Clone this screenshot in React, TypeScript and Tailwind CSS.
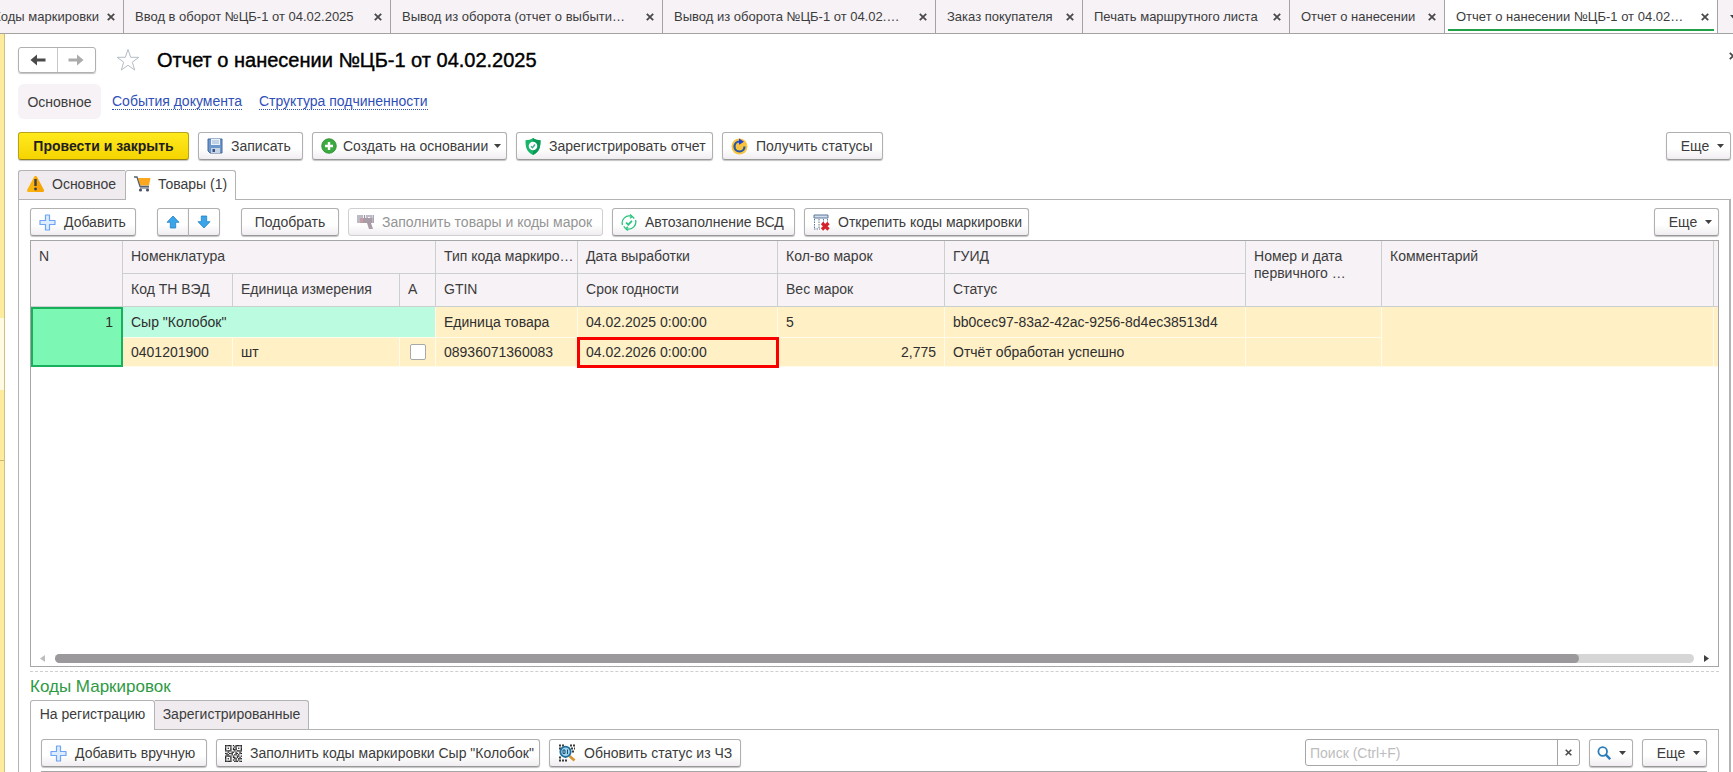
import React from 'react';
import clsx from 'clsx';

const documentTabs = [
  { title: 'Коды маркировки', width: 'w-[124px]', clipped: true },
  { title: 'Ввод в оборот №ЦБ-1 от 04.02.2025', width: 'w-[267px]' },
  { title: 'Вывод из оборота (отчет о выбыти…', width: 'w-[272px]' },
  { title: 'Вывод из оборота №ЦБ-1 от 04.02.…', width: 'w-[273px]' },
  { title: 'Заказ покупателя', width: 'w-[147px]' },
  { title: 'Печать маршрутного листа', width: 'w-[207px]' },
  { title: 'Отчет о нанесении', width: 'w-[155px]' },
  { title: 'Отчет о нанесении №ЦБ-1 от 04.02…', width: 'w-[273px]', active: true },
];

const QR_ROWS = [
  '1111101011111',
  '1000100110001',
  '1010101010101',
  '1000101110001',
  '1111100101111',
  '0010011010010',
  '1101110011011',
  '0110010110100',
  '1111101001101',
  '1000101101010',
  '1010100110111',
  '1000101010100',
  '1111100111011',
];

const CrossIcon = ({ className = 'size-2' }: { className?: string }) => (
  <svg viewBox="0 0 8 8" className={className} fill="none" stroke="#4a4a4a" strokeWidth="1.8">
    <path d="M.8 .8 7.2 7.2M7.2 .8 .8 7.2" />
  </svg>
);

const Caret = () => (
  <svg viewBox="0 0 7 4" className="h-1 w-[7px] shrink-0">
    <path d="M0 0h7L3.5 4z" fill="#404040" />
  </svg>
);

const ArrowIcon = ({ muted, flip }: { muted?: boolean; flip?: boolean }) => (
  <svg viewBox="0 0 16 12" className={clsx('h-3 w-4', flip && 'rotate-180')}>
    <path d="M7 .5V4.600h8.500v2.800H7v4.100L.5 6z" fill={muted ? '#ababab' : '#4a4a4a'} />
  </svg>
);

const StarIcon = () => (
  <svg viewBox="0 0 24 24" className="size-6">
    <path d="M12 1.500 14.700 9.300H22.800L16.300 14.200 18.700 22 12 17.300 5.300 22 7.700 14.200 1.200 9.300H9.300z" fill="#fff" stroke="#b4bcc4" />
  </svg>
);

const FloppyIcon = () => (
  <svg viewBox="0 0 16 16" className="size-4 shrink-0">
    <path d="M1 1h14v14H3l-2-2z" fill="#6d97cb" stroke="#45699c" />
    <path d="M4 1h9v6H4z" fill="#e9f1fa" />
    <path d="M5 3h7M5 5h7" stroke="#9bb3d0" />
    <path d="M4 10h9v5H4z" fill="#c7d4e4" />
    <path d="M5.500 11h2.500v3H5.500z" fill="#35547f" />
  </svg>
);

const PlusCircleIcon = () => (
  <svg viewBox="0 0 16 16" className="size-4 shrink-0">
    <circle cx="8" cy="8" r="7.300" fill="#3cab3f" stroke="#2a8a33" strokeWidth=".8" />
    <path d="M8 4v8M4 8h8" stroke="#fff" strokeWidth="2.400" />
  </svg>
);

const ShieldIcon = () => (
  <svg viewBox="0 0 16 17" className="h-[17px] w-4 shrink-0">
    <path d="M8 0c2 1.500 4.500 2.200 7.500 2.200 0 7-1 11.500-7.500 14.800C1.500 13.700.5 9.200.5 2.200 3.500 2.200 6 1.500 8 0z" fill="#16b568" />
    <path d="M8 0c2 1.500 4.500 2.200 7.500 2.200 0 7-1 11.500-7.500 14.800z" fill="#0a9a57" />
    <circle cx="8" cy="8" r="4.300" fill="#fff" />
    <path d="m6 8.200 1.500 1.500L10 6.500" fill="none" stroke="#3fae94" strokeWidth="1.500" />
  </svg>
);

const RefreshIcon = () => (
  <svg viewBox="0 0 17 17" className="size-[17px] shrink-0">
    <circle cx="8.500" cy="8.500" r="8" fill="#f8c440" />
    <path d="M13.500 8.500a5 5 0 1 1-5-5" fill="none" stroke="#2456a8" strokeWidth="2.200" />
    <path d="M8 .5 13 3.700 8 6.800z" fill="#1f3fd0" />
  </svg>
);

const WarningIcon = () => (
  <svg viewBox="0 0 17 16" className="h-4 w-[17px] shrink-0">
    <path d="M8.500 1.500 15.500 14.500H1.500z" fill="#fbb40c" stroke="#fbb40c" strokeWidth="3" strokeLinejoin="round" />
    <path d="M8.500 0Q9.500 0 10 1L17 14.500Q17 16 15.500 16H8.500z" fill="#f39a06" opacity=".6" />
    <path d="M8.500 3v7" stroke="#3c4046" strokeWidth="2.400" />
    <circle cx="8.500" cy="13" r="1.400" fill="#3c4046" />
  </svg>
);

const CartIcon = () => (
  <svg viewBox="0 0 17 16" className="h-4 w-[17px] shrink-0">
    <path d="M4 2h12.500L15 9.500H6z" fill="#fba81c" />
    <path d="M0 1h3l3 9.500h9" fill="none" stroke="#57606c" strokeWidth="1.300" />
    <path d="M6 12h9" stroke="#57606c" />
    <circle cx="6.500" cy="14" r="1.600" fill="#4b5560" />
    <circle cx="13.500" cy="14" r="1.600" fill="#4b5560" />
  </svg>
);

const PlusIcon = () => (
  <svg viewBox="0 0 17 17" className="size-[17px] shrink-0">
    <path d="M6.500 1h4v5.500H16v4h-5.500V16h-4v-5.500H1v-4h5.500z" fill="#dcebff" stroke="#6ea4f4" strokeWidth="1.200" strokeLinejoin="round" />
  </svg>
);

const BlockArrowIcon = ({ down }: { down?: boolean }) => (
  <svg viewBox="0 0 14 14" className={clsx('size-3.5', down && 'rotate-180')}>
    <path d="M7 1 13 7.300H9.700V13H4.300V7.300H1z" fill="#3aa5ea" stroke="#2482c4" strokeWidth=".8" />
  </svg>
);

const ScannerIcon = () => (
  <svg viewBox="0 0 17 16" className="h-4 w-[17px] shrink-0">
    <path d="M1 1v8M3 1v8M5 1v8M7.500 1v7M10 1v3M12 1v2M14 1v3M16.200 1v8" stroke="#9a96a8" strokeWidth="1.300" />
    <path d="M3 4h12.500v5h-1.500l2 6h-4l-2-6H3z" fill="#a89ca6" />
    <path d="M3 4h3v5H3z" fill="#c79ca4" />
  </svg>
);

const SyncCheckIcon = () => (
  <svg viewBox="0 0 16 17" className="h-[17px] w-4 shrink-0" fill="none" stroke="#27c47d" strokeWidth="1.300">
    <path d="M1.500 11A7 7 0 0 1 10 2.200M14.500 6A7 7 0 0 1 6 14.800" />
    <path d="M9 .5 11.300 2.500 9 4.300M7 12.700 4.700 14.700 7 16.500" />
    <path d="M11.500 2.800l1.800 1.600M4.300 14l-1.600-1.600" />
    <path d="m5 8.500 2.300 2.200L11 6.800" strokeWidth="1.700" />
  </svg>
);

const DetachIcon = () => (
  <svg viewBox="0 0 17 17" className="size-[17px] shrink-0">
    <path d="M1 1h14v3H1z" fill="#cfdcec" stroke="#5c7797" />
    <path d="M1.500 5v10M6 5v10M10.500 5v4M14.500 5v3M1 15h6" stroke="#5c7797" strokeDasharray="1.500 1" />
    <path d="m9 9 6.500 6.500M15.500 9 9 15.500" stroke="#d5232c" strokeWidth="3.200" />
  </svg>
);

const QrIcon = () => (
  <svg viewBox="0 0 13 13" className="size-[17px] shrink-0">
    {QR_ROWS.map((row, y) =>
      row.split('').map((cell, x) => (cell === '1' ? <rect key={`${x}-${y}`} x={x} y={y} width="1" height="1" fill="#222" /> : null))
    )}
  </svg>
);

const CodeSearchIcon = () => (
  <svg viewBox="0 0 18 18" className="size-[18px] shrink-0">
    <path d="M1 1.500h5M12 1.500h5M1 4.500h2M13 4.500h4M14 7.500h3M1 13.500h3M1 16.500h9" stroke="#3a3a3a" strokeWidth="2" strokeDasharray="2 1" />
    <path d="m11.500 12 5 4.500" stroke="#d99530" strokeWidth="2.800" />
    <circle cx="7.500" cy="7.800" r="5.200" fill="#9fd4ee" stroke="#1f6f9c" strokeWidth="1.800" />
    <path d="M5 6h2v3.500H5zM9.500 5.500v4.500" fill="none" stroke="#1d4f70" />
  </svg>
);

const SearchIcon = () => (
  <svg viewBox="0 0 14 14" className="size-3.5" fill="none" stroke="#2b7cb8">
    <circle cx="5.700" cy="5.500" r="4.300" strokeWidth="1.800" />
    <path d="m8.800 8.700 4.400 4.500" strokeWidth="2.400" />
  </svg>
);

interface ToolButtonProps extends React.ButtonHTMLAttributes<HTMLButtonElement> {
  icon?: React.ReactNode;
  menu?: boolean;
}

const ToolButton: React.FC<ToolButtonProps> = ({ icon, menu, className, children, ...rest }) => (
  <button
    type="button"
    className={clsx(
      'flex h-7 shrink-0 items-center whitespace-nowrap rounded-[3px] border border-[#b0b0b0] border-b-[#989898] bg-linear-to-b from-white from-60% to-[#f0edf0] shadow-[0_1px_1px_#c4c4c4] disabled:border-[#cfcfcf] disabled:text-[#949494] disabled:shadow-none',
      icon ? 'pl-2' : 'justify-center',
      icon && menu ? 'gap-1.5' : 'gap-2',
      className
    )}
    {...rest}
  >
    {icon}
    {children}
    {menu && <Caret />}
  </button>
);

const MoreButton = () => (
  <ToolButton menu className="ml-auto w-[65px] pl-2">
    Еще
  </ToolButton>
);

const headCell = 'border-r border-b border-[#cbcfcd] bg-[#f6f2f6] pt-[7px] pl-2 text-left align-top font-normal leading-[17px] whitespace-nowrap';
const bodyCell = 'border-r border-b border-[#fffbea] bg-[#fff0c6] px-2 truncate';

const GoodsTable = () => (
  <table className="w-full table-fixed border-separate border-spacing-0 text-[#3c3c3c]">
    <colgroup>
      <col className="w-[92px]" />
      <col className="w-[110px]" />
      <col className="w-[167px]" />
      <col className="w-9" />
      <col className="w-[142px]" />
      <col className="w-[200px]" />
      <col className="w-[167px]" />
      <col className="w-[301px]" />
      <col className="w-[136px]" />
      <col />
      <col className="w-1" />
    </colgroup>
    <thead>
      <tr className="h-[33px]">
        <th rowSpan={2} className={headCell}>N</th>
        <th colSpan={3} className={headCell}>Номенклатура</th>
        <th className={headCell}>Тип кода маркиро…</th>
        <th className={headCell}>Дата выработки</th>
        <th className={headCell}>Кол-во марок</th>
        <th className={headCell}>ГУИД</th>
        <th rowSpan={2} className={headCell}>Номер и дата<br />первичного …</th>
        <th rowSpan={2} className={headCell}>Комментарий</th>
        <th rowSpan={2} className="border-b border-[#cbcfcd] bg-[#f6f2f6]" />
      </tr>
      <tr className="h-[33px]">
        <th className={headCell}>Код ТН ВЭД</th>
        <th className={headCell}>Единица измерения</th>
        <th className={headCell}>А</th>
        <th className={headCell}>GTIN</th>
        <th className={headCell}>Срок годности</th>
        <th className={headCell}>Вес марок</th>
        <th className={headCell}>Статус</th>
      </tr>
    </thead>
    <tbody className="text-[#2e2e2e]">
      <tr className="h-[31px]">
        <td rowSpan={2} className="border-2 border-[#18b05a] bg-[#7df7b4] px-2 pt-[5px] text-right align-top leading-[17px]">1</td>
        <td colSpan={3} className="truncate border-r border-b border-[#fffbea] bg-[#bbfbdf] px-2">Сыр "Колобок"</td>
        <td className={bodyCell}>Единица товара</td>
        <td className={bodyCell}>04.02.2025 0:00:00</td>
        <td className={bodyCell}>5</td>
        <td className={bodyCell}>bb0cec97-83a2-42ac-9256-8d4ec38513d4</td>
        <td className={bodyCell} />
        <td rowSpan={2} className={bodyCell} />
        <td rowSpan={2} className="border-b border-[#fffbea] bg-[#fff0c6]" />
      </tr>
      <tr className="h-[29px]">
        <td className={bodyCell}>0401201900</td>
        <td className={bodyCell}>шт</td>
        <td className={bodyCell}>
          <input type="checkbox" aria-label="А" className="mx-auto block size-4 appearance-none rounded-xs border border-[#a8a8a8] bg-white" />
        </td>
        <td className={bodyCell}>08936071360083</td>
        <td className={clsx(bodyCell, 'outline-3 -outline-offset-2 outline-[#f90000]')}>04.02.2026 0:00:00</td>
        <td className={clsx(bodyCell, 'text-right')}>2,775</td>
        <td className={bodyCell}>Отчёт обработан успешно</td>
        <td className={bodyCell} />
      </tr>
    </tbody>
  </table>
);

const App: React.FC = () => {
  return (
    <div className="flex h-screen flex-col overflow-hidden bg-white font-['Liberation_Sans',Arial,sans-serif] text-[14px] leading-4 text-[#3c3c3c]">
      <nav className="flex h-[34px] shrink-0 border-b border-[#a3a3a3] bg-[#f6f2f6] text-[13px]">
        {documentTabs.map((tab) => (
          <div
            key={tab.title}
            className={clsx(
              'relative flex shrink-0 items-center border-r border-[#a3a3a3] pr-2',
              tab.width,
              tab.clipped ? 'justify-end gap-2 overflow-hidden' : 'justify-between gap-1 pl-[11px]',
              tab.active && 'bg-white'
            )}
          >
            <span className="whitespace-nowrap">{tab.title}</span>
            <button type="button" aria-label="Закрыть" className="shrink-0">
              <CrossIcon />
            </button>
            {tab.active && <span className="absolute inset-x-[3px] bottom-0.5 h-0.5 bg-[#22a045]" />}
          </div>
        ))}
        <button type="button" aria-label="Список окон" className="flex shrink-0 items-center pl-3">
          <Caret />
        </button>
      </nav>

      <div className="flex min-h-0 grow">
        <aside className="flex w-[5px] shrink-0 flex-col border-r border-[#cfc183] bg-[#fdec9e]">
          <div className="h-[284px]" />
          <div className="h-[72px] bg-[#fffbe3]" />
          <div className="h-[71px] border-b border-[#c9b873]" />
        </aside>

        <main className="flex min-w-0 grow flex-col pt-3 pr-0.5 pl-[13px]">
          <header className="flex h-7 items-center">
            <div className="flex h-[26px] w-[78px] rounded-[3px] border border-[#b0b0b0] shadow-[0_1px_1px_#c4c4c4]">
              <button type="button" aria-label="Назад" className="flex grow items-center justify-center border-r border-[#c8c8c8]">
                <ArrowIcon />
              </button>
              <button type="button" aria-label="Вперед" className="flex grow items-center justify-center">
                <ArrowIcon muted flip />
              </button>
            </div>
            <button type="button" aria-label="В избранное" className="ml-5">
              <StarIcon />
            </button>
            <h1 className="ml-[17px] text-xl leading-6 font-normal text-black [-webkit-text-stroke:0.4px_black]">
              Отчет о нанесении №ЦБ-1 от 04.02.2025
            </h1>
            <button type="button" aria-label="Закрыть форму" className="-mr-1.5 mb-2 ml-auto">
              <CrossIcon />
            </button>
          </header>

          <div className="mt-2.5 flex h-[35px] shrink-0 items-center">
            <span className="flex h-full w-[83px] items-center justify-center rounded-md bg-[#f6f2f6]">Основное</span>
            <a href="#events" className="ml-[11px] border-b border-dotted border-[#2f50b8] text-[#2f50b8]">События документа</a>
            <a href="#structure" className="ml-[17px] border-b border-dotted border-[#2f50b8] text-[#2f50b8]">Структура подчиненности</a>
          </div>

          <div className="mt-[13px] flex shrink-0 gap-[9px]">
            <button
              type="button"
              className="h-7 w-[171px] rounded-[3px] border border-[#b7a21c] border-b-[#94810f] bg-linear-to-b from-[#ffea1c] to-[#f5d400] font-bold text-[#1e1e1e] shadow-[0_1px_1px_#c4c4c4]"
            >
              Провести и закрыть
            </button>
            <ToolButton icon={<FloppyIcon />} className="w-[105px]">Записать</ToolButton>
            <ToolButton icon={<PlusCircleIcon />} menu className="w-[195px]">Создать на основании</ToolButton>
            <ToolButton icon={<ShieldIcon />} className="w-[197px]">Зарегистрировать отчет</ToolButton>
            <ToolButton icon={<RefreshIcon />} className="w-[161px]">Получить статусы</ToolButton>
            <MoreButton />
          </div>

          <div className="mt-2.5 flex h-[29px] shrink-0">
            <button type="button" className="flex w-[107px] items-center gap-2 rounded-tl-[3px] border border-r-0 border-b-0 border-[#b3b3b3] bg-[#efebef] pb-0.5 pl-2">
              <WarningIcon />
              Основное
            </button>
            <button type="button" className="relative -mb-px flex w-[111px] items-center gap-[7px] rounded-t-[3px] border border-b-0 border-[#b3b3b3] bg-white pb-[3px] pl-2">
              <CartIcon />
              Товары (1)
            </button>
          </div>

          <section className="flex min-h-0 grow flex-col border-t border-r-2 border-l border-[#b3b3b3] pt-2 pr-2.5 pl-[11px]">
            <div className="flex shrink-0 gap-[9px]">
              <ToolButton icon={<PlusIcon />} className="w-[106px]">Добавить</ToolButton>
              <div className="ml-3 flex">
                <ToolButton aria-label="Вверх" className="w-8 rounded-r-none"><BlockArrowIcon /></ToolButton>
                <ToolButton aria-label="Вниз" className="-ml-px w-8 rounded-l-none"><BlockArrowIcon down /></ToolButton>
              </div>
              <ToolButton className="ml-3 w-[98px]">Подобрать</ToolButton>
              <ToolButton icon={<ScannerIcon />} disabled className="w-[255px]">Заполнить товары и коды марок</ToolButton>
              <ToolButton icon={<SyncCheckIcon />} className="w-[183px]">Автозаполнение ВСД</ToolButton>
              <ToolButton icon={<DetachIcon />} className="w-[225px]">Открепить коды маркировки</ToolButton>
              <MoreButton />
            </div>

            <div className="mt-1 flex min-h-0 grow flex-col border border-[#a6a6a6]">
              <div className="min-h-0 grow overflow-hidden">
                <GoodsTable />
              </div>
              <div className="flex h-[15px] shrink-0 items-center gap-2.5 px-[9px]">
                <svg viewBox="0 0 5 7" className="h-[7px] w-[5px]"><path d="M5 0v7L0 3.500z" fill="#bdbdbd" /></svg>
                <div className="h-[9px] grow rounded-full bg-[#d6d6d6]">
                  <div className="h-full w-[93%] rounded-full bg-[#9b999b]" />
                </div>
                <svg viewBox="0 0 5 7" className="h-[7px] w-[5px]"><path d="M0 0v7l5-3.500z" fill="#404040" /></svg>
              </div>
            </div>

            <div className="mt-1 shrink-0 border-t border-dashed border-[#cfcfcf]" />
            <h2 className="mt-[5px] shrink-0 text-[17px] leading-5 text-[#2e9a44]">Коды Маркировок</h2>

            <div className="mt-[3px] flex h-[29px] shrink-0">
              <button type="button" className="relative -mb-px w-[125px] rounded-t-[3px] border border-b-0 border-[#b3b3b3] bg-white pb-[3px]">На регистрацию</button>
              <button type="button" className="w-[154px] rounded-tr-[3px] border border-b-0 border-l-0 border-[#b3b3b3] bg-[#efebef] pb-0.5">Зарегистрированные</button>
            </div>
            <div className="h-[43px] shrink-0 border-x border-t border-[#b3b3b3] pt-[9px] pr-[11px] pl-2.5">
              <div className="flex gap-[9px]">
                <ToolButton icon={<PlusIcon />} className="w-[166px]">Добавить вручную</ToolButton>
                <ToolButton icon={<QrIcon />} className="w-[324px]">Заполнить коды маркировки Сыр "Колобок"</ToolButton>
                <ToolButton icon={<CodeSearchIcon />} className="w-[192px]">Обновить статус из ЧЗ</ToolButton>
                <div className="ml-auto flex h-[27px] w-[275px] rounded-[3px] border border-[#a6a6a6]">
                  <input type="text" aria-label="Поиск" placeholder="Поиск (Ctrl+F)" className="min-w-0 grow px-1 outline-none placeholder:text-[#bdbdbd]" />
                  <button type="button" aria-label="Очистить" className="flex w-[22px] items-center justify-center border-l border-[#a6a6a6]">
                    <CrossIcon className="size-[7px]" />
                  </button>
                </div>
                <ToolButton aria-label="Найти" menu className="w-11"><SearchIcon /></ToolButton>
                <ToolButton menu className="w-[65px] pl-2">Еще</ToolButton>
              </div>
              <div className="mt-1 border-t-2 border-[#a6a6a6]" />
            </div>
          </section>
        </main>
      </div>
    </div>
  );
};

export default App;
